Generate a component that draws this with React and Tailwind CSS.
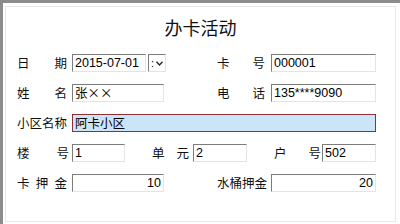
import React from 'react'

const cjk = "font-['Noto_Sans_CJK_SC',sans-serif]"
const latin = "font-['Liberation_Sans','Noto_Sans_CJK_SC',sans-serif]"

function Label({ chars, width = 'w-[50px]' }) {
  return (
    <div className={`${width} flex justify-between text-[12.5px] leading-none text-[#111] ${cjk}`}>
      {chars.split('').map((c, i) => (
        <span key={i}>{c}</span>
      ))}
    </div>
  )
}

function Field({ value, width, right = false, font = latin }) {
  return (
    <div
      className={`${width} h-[18px] flex items-center px-[2px] bg-white border border-t-[#7c7c7c] border-l-[#7c7c7c] border-r-[#e4e4e4] border-b-[#e4e4e4] text-[12.5px] text-black ${font} ${right ? 'justify-end' : ''}`}
    >
      {value}
    </div>
  )
}

export default function App() {
  return (
    <div className="w-[400px] h-[224px] bg-white border-t-[3px] border-l-[3px] border-[#8c8c8c] overflow-hidden">
      <div className="pl-[2px] pt-[3px]">
        <div className="w-[391px] h-[216px] border border-[#e8e8e8]">
          {/* Title */}
          <div className="h-[47px] pt-[8px] flex justify-center">
            <h1 className={`text-[18px] leading-[24px] text-[#111] ${cjk}`}>办卡活动</h1>
          </div>

          <div className="pl-[11px] flex flex-col gap-[12px]">
            {/* Row 1 */}
            <div className="grid grid-cols-[200px_1fr] h-[18px]">
              <div className="flex items-center">
                <Label chars="日期" />
                <div className="ml-[5px] flex items-center gap-[2px]">
                  <Field value="2015-07-01" width="w-[74px]" />
                  <div className="w-[18px] h-[18px] flex items-center justify-center gap-[2px] border border-t-[#7c7c7c] border-l-[#7c7c7c] border-r-[#e4e4e4] border-b-[#e4e4e4] text-[11px] leading-none">
                    <span className={latin}>:</span>
                    <svg width="7" height="5" viewBox="0 0 7 5">
                      <polyline points="0.5,0.8 3.5,4 6.5,0.8" fill="none" stroke="#222" strokeWidth="1.3" />
                    </svg>
                  </div>
                </div>
              </div>
              <div className="flex items-center">
                <Label chars="卡号" width="w-[48px]" />
                <div className="ml-[6px]">
                  <Field value="000001" width="w-[105px]" />
                </div>
              </div>
            </div>

            {/* Row 2 */}
            <div className="grid grid-cols-[200px_1fr] h-[18px]">
              <div className="flex items-center">
                <Label chars="姓名" />
                <div className="ml-[5px]">
                  <Field value="张××" width="w-[92px]" font={cjk} />
                </div>
              </div>
              <div className="flex items-center">
                <Label chars="电话" width="w-[48px]" />
                <div className="ml-[6px]">
                  <Field value="135****9090" width="w-[105px]" />
                </div>
              </div>
            </div>

            {/* Row 3 */}
            <div className="flex items-center h-[18px]">
              <Label chars="小区名称" />
              <div
                className={`ml-[5px] w-[304px] h-[18px] flex items-center px-[2px] bg-[#cce4f7] border border-[#8e2f35] text-[12.5px] text-black ${cjk}`}
              >
                阿卡小区
              </div>
            </div>

            {/* Row 4 */}
            <div className="flex items-center h-[18px]">
              <Label chars="楼号" width="w-[52px]" />
              <div className="ml-[3px]">
                <Field value="1" width="w-[53px]" />
              </div>
              <div className="ml-[27px]">
                <Label chars="单元" width="w-[37px]" />
              </div>
              <div className="ml-[4px]">
                <Field value="2" width="w-[54px]" />
              </div>
              <div className="ml-[27px]">
                <Label chars="户号" width="w-[47px]" />
              </div>
              <div className="ml-[1px]">
                <Field value="502" width="w-[54px]" />
              </div>
            </div>

            {/* Row 5 */}
            <div className="grid grid-cols-[200px_1fr] h-[18px]">
              <div className="flex items-center">
                <Label chars="卡押金" />
                <div className="ml-[5px]">
                  <Field value="10" width="w-[92px]" right />
                </div>
              </div>
              <div className="flex items-center">
                <Label chars="水桶押金" width="w-[48px]" />
                <div className="ml-[6px]">
                  <Field value="20" width="w-[105px]" right />
                </div>
              </div>
            </div>
          </div>
        </div>
      </div>
    </div>
  )
}
